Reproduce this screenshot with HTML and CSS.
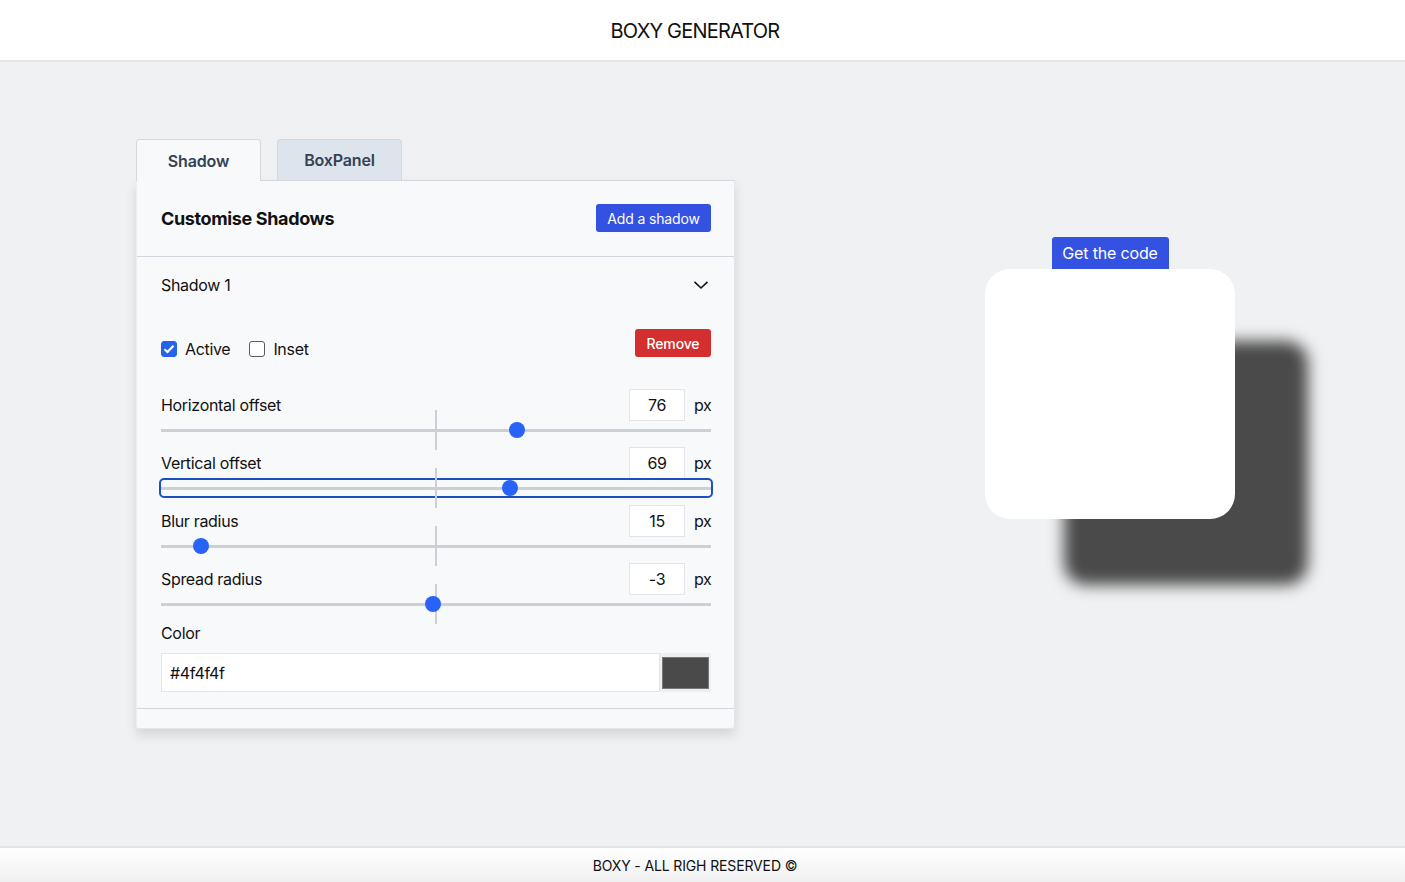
FILE: index.html
```html
<!DOCTYPE html>
<html lang="en">
<head>
<meta charset="utf-8">
<title>Boxy Generator</title>
<link rel="stylesheet" href="styles.css">
</head>
<body>
<header class="topbar"><h1 class="brand">BOXY GENERATOR</h1></header>
<main class="main">
  <section class="editor">
    <div class="tabs">
      <button class="tab tab-active">Shadow</button>
      <button class="tab">BoxPanel</button>
    </div>
    <div class="panel">
      <div class="panel-head">
        <h2 class="panel-title">Customise Shadows</h2>
        <button class="btn btn-blue">Add a shadow</button>
      </div>
      <div class="acc-head">
        <span>Shadow 1</span>
        <svg class="chev" width="16" height="10" viewBox="0 0 16 10"><path d="M1.5 1.8 L8 8 L14.5 1.8" fill="none" stroke="#111" stroke-width="1.6"/></svg>
      </div>
      <div class="acc-body">
        <div class="opts">
          <div class="checks">
            <label class="check"><span class="box box-on"><svg width="12" height="10" viewBox="0 0 12 10"><path d="M1.5 5.2 L4.5 8 L10.5 1.8" fill="none" stroke="#fff" stroke-width="2.2"/></svg></span>Active</label>
            <label class="check"><span class="box"></span>Inset</label>
          </div>
          <button class="btn btn-red">Remove</button>
        </div>

        <div class="field">
          <div class="field-row"><span class="field-label">Horizontal offset</span><span class="num">76</span><span class="unit">px</span></div>
          <div class="slider"><div class="track"></div><div class="tick"></div><div class="thumb" style="left: calc(8px + 0.652 * (100% - 16px))"></div></div>
        </div>
        <div class="field">
          <div class="field-row"><span class="field-label">Vertical offset</span><span class="num">69</span><span class="unit">px</span></div>
          <div class="slider slider-focus"><div class="track"></div><div class="tick"></div><div class="thumb" style="left: calc(8px + 0.638 * (100% - 16px))"></div></div>
        </div>
        <div class="field">
          <div class="field-row"><span class="field-label">Blur radius</span><span class="num">15</span><span class="unit">px</span></div>
          <div class="slider"><div class="track"></div><div class="tick"></div><div class="thumb" style="left: calc(8px + 0.06 * (100% - 16px))"></div></div>
        </div>
        <div class="field">
          <div class="field-row"><span class="field-label">Spread radius</span><span class="num">-3</span><span class="unit">px</span></div>
          <div class="slider"><div class="track"></div><div class="tick"></div><div class="thumb" style="left: calc(8px + 0.494 * (100% - 16px))"></div></div>
        </div>

        <div class="color-label">Color</div>
        <div class="color-row">
          <div class="color-text">#4f4f4f</div>
          <div class="swatch"><div class="swatch-fill"></div></div>
        </div>
      </div>
      <div class="panel-foot"></div>
    </div>
  </section>
  <section class="preview">
    <button class="btn btn-blue btn-code">Get the code</button>
    <div class="box-preview"></div>
  </section>
</main>
<footer class="footer">BOXY - ALL RIGH RESERVED ©</footer>
</body>
</html>
```

FILE: styles.css
```css
* { box-sizing: border-box; }
html, body { margin: 0; padding: 0; }
body {
  font-family: Inter, "Noto Sans", "Liberation Sans", sans-serif;
  letter-spacing: -0.02em;
  color: #111;
  background: #f0f1f3;
  height: 882px;
  display: flex;
  flex-direction: column;
  overflow: hidden;
}
.topbar {
  height: 62px;
  background: #fff;
  border-bottom: 2px solid #e4e5e9;
  display: flex;
  align-items: center;
  justify-content: center;
  padding-right: 15px;
}
.brand {
  margin: 0;
  font-size: 20px;
  font-weight: 400;
  letter-spacing: -0.04em;
  color: #111;
  padding-top: 2px;
}
.main {
  flex: 1;
  display: flex;
  align-items: flex-start;
  padding: 77px 0 0 136px;
}
.editor { width: 599px; }
.tabs { display: flex; gap: 16px; height: 41px; position: relative; z-index: 1; }
.tab {
  width: 125px;
  height: 41px;
  font: 600 16px Inter, "Liberation Sans", sans-serif;
  letter-spacing: -0.01em;
  color: #334155;
  background: #dee4ec;
  border: 1px solid #d3d8df;
  border-bottom: none;
  border-radius: 4px 4px 0 0;
  padding: 0;
}
.tab-active { background: #f8f9fb; height: 42px; }
.panel {
  background: #f8f9fb;
  border: 1px solid #e3e5ea;
  border-top-color: #d3d8df;
  border-left-color: #eceef1;
  box-shadow: 0 6px 12px rgba(0,0,0,0.12);
  border-radius: 0 0 3px 3px;
}
.panel-head {
  height: 76px;
  display: flex;
  align-items: center;
  justify-content: space-between;
  padding: 0 23px 1px 24px;
  border-bottom: 1px solid #d3d6dd;
}
.panel-title { margin: 0; font-size: 18px; font-weight: 700; letter-spacing: -0.02em; }
.btn {
  border: none;
  border-radius: 3px;
  color: #fff;
  font-family: Inter, "Liberation Sans", sans-serif;
  letter-spacing: -0.01em;
  font-size: 14px;
  height: 28px;
  padding: 0;
  white-space: nowrap;
}
.btn-blue { background: #3452e1; width: 115px; }
.btn-red { background: #d32f2f; width: 76px; font-weight: 500; }
.acc-head {
  height: 56px;
  display: flex;
  align-items: center;
  justify-content: space-between;
  padding: 0 25px 0 24px;
  font-size: 16px;
}
.acc-body { padding: 16px 23px 16px 24px; border-bottom: 1px solid #d3d6dd; }
.opts { display: flex; justify-content: space-between; align-items: flex-start; height: 60px; }
.checks { display: flex; gap: 19px; margin-top: 8px; }
.check { display: flex; align-items: center; gap: 8px; font-size: 16px; line-height: 24px; }
.box {
  width: 16px; height: 16px;
  border: 1.5px solid #5b5b5b;
  border-radius: 3px;
  background: #fff;
  display: flex; align-items: center; justify-content: center;
}
.box-on { background: #2563eb; border-color: #2563eb; }
.field { margin-bottom: 9px; }
.field-row { display: flex; align-items: center; height: 32px; }
.field-label { flex: 1; font-size: 16px; }
.num {
  width: 56px; height: 32px;
  background: #fff;
  border: 1px solid #e3e5ea;
  display: flex; align-items: center; justify-content: center;
  font-size: 16px;
}
.unit { margin-left: 9px; font-size: 16px; width: 17px; }
.slider { position: relative; height: 16px; margin-top: 1px; }
.track { position: absolute; left: 0; right: 0; top: 6.5px; height: 3px; background: #cbd0d6; }
.tick { position: absolute; left: 50%; margin-left: -1px; top: -12px; width: 2px; height: 40px; background: #cbd0d6; }
.thumb {
  position: absolute; top: 0; width: 16px; height: 16px; margin-left: -8px;
  border-radius: 50%; background: #2962f6;
}
.slider-focus { outline: 2px solid #1e4fc2; outline-offset: 0; border-radius: 3px; }
.color-label { font-size: 16px; line-height: 24px; margin-top: 9px; }
.color-row { display: flex; margin-top: 8px; height: 39px; }
.color-text {
  flex: 1;
  background: #fff;
  border: 1px solid #e3e5ea;
  font-size: 16px;
  padding-left: 8px;
  display: flex; align-items: center;
}
.swatch { width: 51px; background: #efefef; padding: 4px 2px 3px 2px; }
.swatch-fill { width: 100%; height: 100%; background: #4a4a4a; border: 1px solid #777; }
.panel-foot { height: 19px; }
.preview {
  margin-left: 250px;
  margin-top: 98px;
  display: flex;
  flex-direction: column;
  align-items: center;
  width: 250px;
}
.btn-code { font-size: 16px; height: 32px; width: 117px; padding: 0; border-radius: 3px 3px 0 0; }
.box-preview {
  width: 250px; height: 250px;
  background: #fff;
  border-radius: 25px;
  box-shadow: 76px 69px 15px -3px #4a4a4a;
}
.footer {
  height: 36px;
  border-top: 2px solid #e2e2e7;
  background: linear-gradient(#fff, #f0f0f0);
  display: flex; align-items: center; justify-content: center;
  padding-right: 15px;
  font-size: 14px;
  letter-spacing: -0.01em;
  color: #111;
}
```
